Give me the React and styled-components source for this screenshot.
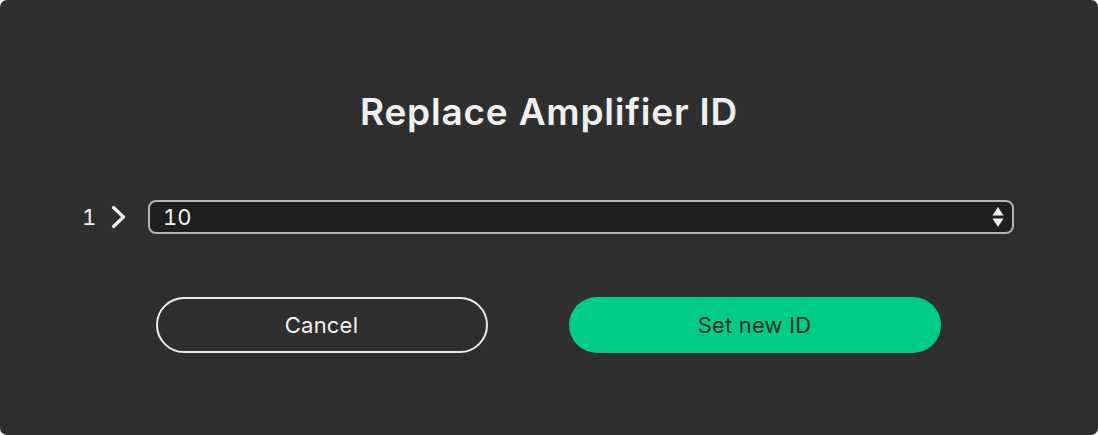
import React from "react";
import styled, { createGlobalStyle } from "styled-components";

const Global = createGlobalStyle`
  html, body { margin: 0; padding: 0; background: #ffffff; }
  body { font-family: Inter, "Noto Sans", sans-serif; }
`;

const Dialog = styled.div`
  width: 1098px;
  height: 435px;
  box-sizing: border-box;
  background: #2f2f2f;
  border-radius: 7px;
  display: flex;
  flex-direction: column;
  align-items: center;
  padding-top: 87px;
`;

const Title = styled.h1`
  margin: 0;
  font-family: Inter, sans-serif;
  font-weight: 600;
  font-size: 37px;
  line-height: 50px;
  color: #f0f0f0;
  letter-spacing: 0.8px;
`;

const Row = styled.div`
  margin-top: 63px;
  width: 100%;
  box-sizing: border-box;
  padding: 0 84px 0 82px;
  display: flex;
  align-items: center;
`;

const Index = styled.span`
  font-size: 22px;
  color: #f0f0f0;
  width: 12px;
  font-variant-numeric: tabular-nums;
`;

const Chevron = styled.svg`
  width: 20px;
  height: 26px;
  margin-left: 16px;
  margin-right: 18px;
`;

const Select = styled.div`
  flex: 1;
  height: 34px;
  box-sizing: border-box;
  border: 2px solid #b4b4b4;
  border-radius: 8px;
  background: #1f1f1f;
  display: flex;
  align-items: center;
  justify-content: space-between;
  padding: 0 8px 0 13px;
  font-size: 22px;
  font-variant-numeric: tabular-nums;
  color: #f2f2f2;
`;

const Arrows = styled.svg`
  width: 12px;
  height: 22px;
`;

const Buttons = styled.div`
  margin-top: 63px;
  margin-right: 2px;
  display: flex;
  gap: 81px;
`;

const Button = styled.button`
  height: 56px;
  width: ${(p) => p.$w}px;
  border-radius: 28px;
  box-sizing: border-box;
  font-family: Inter, sans-serif;
  font-size: 22px;
  font-weight: 400;
  letter-spacing: 0.2px;
  cursor: pointer;
  border: ${(p) => (p.$primary ? "none" : "2px solid #ececec")};
  background: ${(p) => (p.$primary ? "#00cc88" : "transparent")};
  color: ${(p) => (p.$primary ? "#2f2f2f" : "#f2f2f2")};
`;

export default function App() {
  return (
    <>
      <Global />
      <Dialog>
        <Title>Replace Amplifier ID</Title>
        <Row>
          <Index>1</Index>
          <Chevron viewBox="0 0 20 26">
            <path
              d="M3.5 3.5 L13.5 13 L3.5 22.5"
              fill="none"
              stroke="#f0f0f0"
              strokeWidth="3.2"
              strokeLinecap="round"
              strokeLinejoin="round"
            />
          </Chevron>
          <Select>
            <span>10</span>
            <Arrows viewBox="0 0 12 22">
              <path d="M6 1 L11.5 9.5 L0.5 9.5 Z" fill="#f0f0f0" />
              <path d="M6 21 L11.5 12.5 L0.5 12.5 Z" fill="#f0f0f0" />
            </Arrows>
          </Select>
        </Row>
        <Buttons>
          <Button $w={332}>Cancel</Button>
          <Button $w={372} $primary>
            Set new ID
          </Button>
        </Buttons>
      </Dialog>
    </>
  );
}
